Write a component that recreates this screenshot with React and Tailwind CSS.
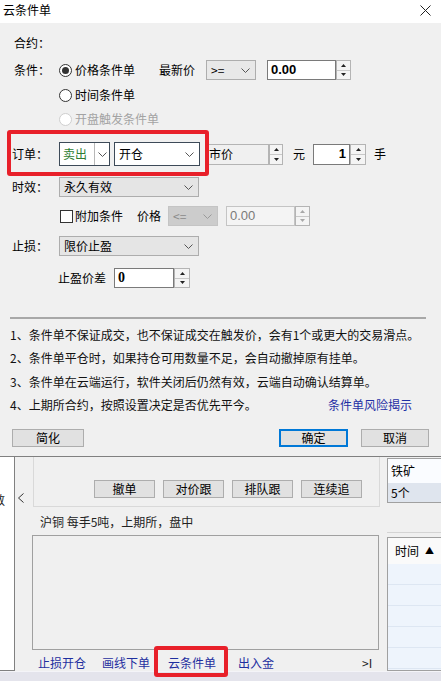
import React from 'react';

// small chevron used by the combo boxes
function Chev({ color = '#555' }) {
  return (
    <svg width="9" height="5" viewBox="0 0 9 5">
      <path d="M0.5 0.5L4.5 4.5L8.5 0.5" fill="none" stroke={color} strokeWidth="1" />
    </svg>
  );
}

function Spin({ w = 'w-[15px]', disabled }) {
  const c = disabled ? '#a8a8a8' : '#222';
  return (
    <div className={`${w} h-full shrink-0 flex flex-col border border-[#b4b4b4] bg-[#f4f4f4]`}>
      <div className="flex-1 flex items-center justify-center border-b border-[#c8c8c8]">
        <svg width="5" height="3" viewBox="0 0 5 3"><path d="M0 3L2.5 0L5 3Z" fill={c} /></svg>
      </div>
      <div className="flex-1 flex items-center justify-center">
        <svg width="5" height="3" viewBox="0 0 5 3"><path d="M0 0L2.5 3L5 0Z" fill={c} /></svg>
      </div>
    </div>
  );
}

function Radio({ checked, disabled }) {
  return (
    <span
      className={`w-[13px] h-[13px] shrink-0 rounded-full border bg-white flex items-center justify-center ${
        disabled ? 'border-[#cfcfcf]' : 'border-[#333]'
      }`}
    >
      {checked && <span className="w-[7px] h-[7px] rounded-full bg-[#333]" />}
    </span>
  );
}

function Combo({ className, text, textClass = '' }) {
  return (
    <div className={`flex items-center justify-between pl-[4px] pr-[5px] border ${className}`}>
      <span className={textClass}>{text}</span>
      <Chev />
    </div>
  );
}

function Btn({ className = '', children }) {
  return (
    <div className={`h-[18px] flex items-center justify-center bg-[#e1e1e1] border border-[#adadad] ${className}`}>
      {children}
    </div>
  );
}

const Label = ({ children }) => <span className="w-[47px] shrink-0">{children}</span>;

export default function App() {
  return (
    <div className="relative w-[441px] h-[681px] overflow-hidden bg-[#f0f0f0] text-[12px] leading-[16px] text-black font-['Noto_Sans_CJK_SC',sans-serif]">
      {/* title bar */}
      <div className="h-[23px] bg-white flex items-center justify-between pl-[3px] pr-[10px] pb-[3px]">
        <span className="text-[12px]">云条件单</span>
        <svg width="11" height="11" viewBox="0 0 11 11">
          <path d="M0.5 0.5L10.5 10.5M10.5 0.5L0.5 10.5" stroke="#222" strokeWidth="1" />
        </svg>
      </div>

      {/* 合约 */}
      <div className="mt-[10px] h-[20px] pl-[14px] flex items-center">合约：</div>

      {/* 条件 */}
      <div className="mt-[7px] h-[20px] pl-[14px] flex items-center">
        <span className="w-[45px] shrink-0">条件：</span>
        <Radio checked />
        <span className="ml-[3px]">价格条件单</span>
        <span className="ml-[24px]">最新价</span>
        <Combo className="ml-[11px] w-[50px] h-[20px] bg-[#e8e8e8] border-[#adadad]" text=">=" />
        <div className="ml-[11px] h-[20px] flex">
          <div className="w-[69px] h-full bg-white border border-[#7a7a7a] flex items-center pl-[3px] font-bold text-[13px] font-['Liberation_Sans',sans-serif]">
            0.00
          </div>
          <Spin />
        </div>
      </div>

      <div className="mt-[5px] h-[20px] pl-[59px] flex items-center">
        <Radio />
        <span className="ml-[3px]">时间条件单</span>
      </div>
      <div className="mt-[4px] h-[20px] pl-[59px] flex items-center text-[#a3a3a3]">
        <Radio disabled />
        <span className="ml-[3px]">开盘触发条件单</span>
      </div>

      {/* 订单 */}
      <div className="mt-[13px] h-[24px] pl-[12px] flex items-center">
        <Label>订单：</Label>
        <div className="w-[51px] h-[24px] flex bg-white border border-[#3d4a58]">
          <span className="flex-1 flex items-center pl-[3px] text-[#2e7d32]">卖出</span>
          <span className="w-[15px] flex items-center justify-center border-l border-[#b8b8b8]">
            <Chev />
          </span>
        </div>
        <Combo className="ml-[4px] w-[86px] h-[24px] bg-white border-[#3d4a58]" text="开仓" />
        <div className="ml-[6px] h-[21px] flex">
          <div className="w-[63px] h-full bg-[#f0f0f0] border border-[#b4b4b4] flex items-center pl-[2px]">市价</div>
          <Spin w="w-[14px]" />
        </div>
        <span className="ml-[10px]">元</span>
        <div className="ml-[8px] h-[21px] flex">
          <div className="w-[37px] h-full bg-white border border-[#7a7a7a] flex items-center justify-end pr-[3px] font-bold text-[13px] font-['Liberation_Sans',sans-serif]">
            1
          </div>
          <Spin w="w-[16px]" />
        </div>
        <span className="ml-[8px]">手</span>
      </div>

      {/* 时效 */}
      <div className="mt-[11px] h-[20px] pl-[12px] flex items-center">
        <Label>时效：</Label>
        <Combo className="w-[140px] h-[20px] bg-[#e5e5e5] border-[#adadad]" text="永久有效" />
      </div>

      {/* 附加条件 */}
      <div className="mt-[9px] h-[20px] pl-[60px] flex items-center">
        <span className="w-[13px] h-[13px] border border-[#333] bg-white shrink-0" />
        <span className="ml-[2px]">附加条件</span>
        <span className="ml-[14px]">价格</span>
        <div className="ml-[7px] w-[50px] h-[20px] flex items-center justify-between pl-[4px] pr-[5px] bg-[#cccccc] border border-[#c4c4c4] text-[#8a8a8a]">
          <span>&lt;=</span>
          <Chev color="#9a9a9a" />
        </div>
        <div className="ml-[8px] h-[20px] flex">
          <div className="w-[69px] h-full bg-[#f4f4f4] border border-[#c4c4c4] flex items-center pl-[3px] text-[13px] text-[#7a7a7a] font-['Liberation_Sans',sans-serif]">
            0.00
          </div>
          <Spin disabled />
        </div>
      </div>

      {/* 止损 */}
      <div className="mt-[10px] h-[20px] pl-[12px] flex items-center">
        <Label>止损：</Label>
        <Combo className="w-[140px] h-[20px] bg-[#e5e5e5] border-[#adadad]" text="限价止盈" />
      </div>

      <div className="mt-[12px] h-[20px] pl-[58px] flex items-center">
        <span>止盈价差</span>
        <div className="ml-[8px] h-[20px] flex">
          <div className="w-[60px] h-full bg-white border border-[#7a7a7a] flex items-center pl-[3px] font-bold text-[14px] font-['Liberation_Serif',serif]">
            0
          </div>
          <Spin w="w-[16px]" />
        </div>
      </div>

      {/* separator */}
      <div className="mt-[29px] mx-[10px] w-[416px] h-[2px] bg-[#a8a8a8]" />

      {/* notes */}
      <div className="mt-[4px] pl-[10px] pr-[15px] text-[#111]">
        <div className="h-[23.5px] flex items-center">1、条件单不保证成交，也不保证成交在触发价，会有1个或更大的交易滑点。</div>
        <div className="h-[23.5px] flex items-center">2、条件单平仓时，如果持仓可用数量不足，会自动撤掉原有挂单。</div>
        <div className="h-[23.5px] flex items-center">3、条件单在云端运行，软件关闭后仍然有效，云端自动确认结算单。</div>
        <div className="h-[23.5px] flex items-center justify-between pr-[14px]">
          <span>4、上期所合约，按照设置决定是否优先平今。</span>
          <span className="text-[#1f2fa5]">条件单风险揭示</span>
        </div>
      </div>

      {/* dialog buttons */}
      <div className="mt-[12px] h-[18px] pl-[12px] flex items-center">
        <Btn className="w-[72px]">简化</Btn>
        <div className="ml-[195px] w-[69px] h-[18px] flex items-center justify-center bg-[#e1e1e1] border-2 border-[#0078d7]">
          确定
        </div>
        <Btn className="ml-[13px] w-[68px]">取消</Btn>
      </div>

      {/* underlying trading window */}
      <div className="mt-[9px] border-t border-[#808080] h-[215px] flex">
        <div className="w-[15px] h-full bg-white border-r border-b border-[#808080] overflow-hidden flex items-start pt-[35px]">
          <span className="-ml-[7px] text-[#222]">数</span>
        </div>

        <div className="w-[17px] shrink-0 pt-[36px] pl-[3px]">
          <svg width="6" height="10" viewBox="0 0 6 10">
            <path d="M5.5 0.5L0.5 5L5.5 9.5" fill="none" stroke="#333" strokeWidth="1" />
          </svg>
        </div>

        <div className="w-[348px] shrink-0 flex flex-col">
          <div className="ml-[1px] w-[347px] h-[50px] border-x border-b border-[#d9d9d9] flex items-start pt-[23px] pl-[60px] gap-[8px]">
            <Btn className="w-[61px] h-[17px]">撤单</Btn>
            <Btn className="w-[61px] h-[17px]">对价跟</Btn>
            <Btn className="w-[61px] h-[17px]">排队跟</Btn>
            <Btn className="w-[61px] h-[17px]">连续追</Btn>
          </div>
          <div className="mt-[7px] h-[16px] pl-[8px] text-[#222]">沪铜 每手5吨，上期所，盘中</div>
          <div className="mt-[5px] w-[347px] h-[115px] border border-[#a0a0a0] bg-[#f0f0f0]" />
          <div className="mt-[5px] h-[16px] relative text-[#1f2f9f]">
            <span className="absolute left-[6px]">止损开仓</span>
            <span className="absolute left-[70px]">画线下单</span>
            <span className="absolute left-[136px]">云条件单</span>
            <span className="absolute left-[206px]">出入金</span>
            <span className="absolute left-[330px] text-[#222]">&gt;I</span>
          </div>
        </div>

        <div className="ml-[7px] flex-1 flex flex-col">
          <div className="mt-[1px] h-[45px] border-l border-y border-[#a0a0a0] flex flex-col">
            <div className="h-[24px] bg-[#fafcff] flex items-center pl-[3px]">铁矿</div>
            <div className="flex-1 bg-[#dfe5ee] flex items-center pl-[3px]">5个</div>
          </div>
          <div className="mt-[29px] h-[1px] bg-[#d4d4d4]" />
          <div className="mt-[4px] h-[134px] border-l border-t border-b border-[#a0a0a0] bg-[#eef4fc] flex flex-col">
            <div className="h-[26px] bg-[#fafafa] flex items-center pl-[7px] gap-[6px]">
              <span>时间</span>
              <span className="text-[9px]">▲</span>
            </div>
            <div className="h-[21px] border-b border-[#dde6f2]" />
            <div className="h-[21px] border-b border-[#dde6f2]" />
            <div className="h-[21px] border-b border-[#dde6f2]" />
            <div className="h-[21px] border-b border-[#dde6f2]" />
            <div className="h-[21px] border-b border-[#dde6f2]" />
          </div>
        </div>
      </div>
      <div className="h-[10px] bg-[#e4e4ec] border-t border-[#f4f4f8]" />

      {/* red highlight marks */}
      <div className="absolute left-[7px] top-[130px] w-[202px] h-[46px] border-[4px] border-[#e8202a] rounded-[3px]" />
      <div className="absolute left-[154px] top-[646px] w-[74px] h-[31px] border-[4px] border-[#e8202a] rounded-[3px]" />
    </div>
  );
}
